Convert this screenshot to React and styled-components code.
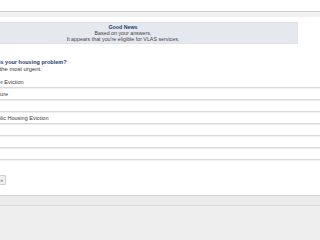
import React from 'react';
import styled, { createGlobalStyle } from 'styled-components';

const GlobalStyle = createGlobalStyle`
  html, body {
    margin: 0;
    padding: 0;
    background: #ffffff;
    overflow: hidden;
  }
  body {
    font-family: "Liberation Sans", Arial, sans-serif;
    color: #333333;
  }
`;

const Page = styled.div`
  display: flex;
  flex-direction: column;
  width: 320px;
  height: 240px;
  overflow: hidden;
`;

const TopBar = styled.div`
  height: 11px;
  border-bottom: 1px solid #cdcdcd;
`;

const SubBar = styled.div`
  height: 5px;
  background: #f1f1f1;
`;

const Main = styled.div`
  display: flex;
  flex-direction: column;
  padding-top: 5px;
`;

const Notice = styled.div`
  margin-left: -18px;
  width: 316px;
  box-sizing: border-box;
  background: #e5e8ef;
  border: 1px solid #dde1e8;
  padding: 1px 34px 1px 0;
  text-align: center;
  font-size: 5.3px;
  line-height: 6px;
  color: #444444;
`;

const NoticeTitle = styled.div`
  font-weight: bold;
  color: #1d3c6e;
`;

const Question = styled.div`
  margin: 15px 0 0 -16px;
  font-size: 5.5px;
  line-height: 7px;
`;

const QuestionTitle = styled.div`
  font-weight: bold;
  color: #1d3c6e;
`;

const QuestionHint = styled.div`
  font-size: 5.8px;
  margin-left: -2px;
`;

const Options = styled.div`
  display: flex;
  flex-direction: column;
  margin-top: 4px;
`;

const OptionRow = styled.div`
  height: 10px;
  line-height: 10px;
  margin-bottom: 1px;
  border-bottom: 1px solid #d8d8d8;
  box-shadow: 0 1px 0 #efefef;
  text-indent: ${p => p.$shift || -10}px;
  font-size: 5.5px;
  color: #3a3a3a;
  white-space: nowrap;
`;

const ButtonRow = styled.div`
  display: flex;
  margin: 14px 0 0 -25px;
`;

const Button = styled.button`
  height: 10px;
  width: 31px;
  padding: 0 2px;
  border: 1px solid #cfcfcf;
  border-radius: 1px;
  background: #f0f0f0;
  font-family: inherit;
  font-size: 5px;
  line-height: 8px;
  color: #666666;
  text-align: right;
`;

const Footer = styled.div`
  flex: 1;
  margin-top: 10px;
  border-top: 1px solid #d3d3d3;
  background: #eeeeee;
  display: flex;
  flex-direction: column;
`;

const FooterBand = styled.div`
  height: 9px;
  background: #ebebeb;
  border-bottom: 1px solid #d9d9d9;
`;

const options = [
  { label: 'Other Eviction', shift: -11 },
  { label: 'Foreclosure', shift: -21 },
  { label: '' },
  { label: 'Public Housing Eviction', shift: -9 },
  { label: '' },
  { label: '' },
  { label: '' },
];

export default function App() {
  return (
    <Page>
      <GlobalStyle />
      <TopBar />
      <SubBar />
      <Main>
        <Notice>
          <NoticeTitle>Good News</NoticeTitle>
          <div>Based on your answers,</div>
          <div>It appears that you're eligible for VLAS services.</div>
        </Notice>
        <Question>
          <QuestionTitle>What is your housing problem?</QuestionTitle>
          <QuestionHint>Select the most urgent.</QuestionHint>
        </Question>
        <Options>
          {options.map((o, i) => (
            <OptionRow key={i} $shift={o.shift}>{o.label}</OptionRow>
          ))}
        </Options>
        <ButtonRow>
          <Button>Next »</Button>
        </ButtonRow>
      </Main>
      <Footer>
        <FooterBand />
      </Footer>
    </Page>
  );
}
